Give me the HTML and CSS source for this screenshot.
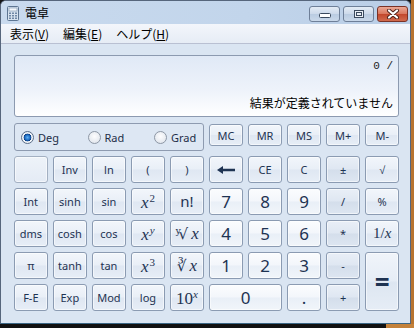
FILE: index.html
```html
<!DOCTYPE html>
<html lang="ja">
<head>
  <meta charset="UTF-8">
  <title>電卓</title>
  <link rel="stylesheet" href="styles.css">
</head>
<body>
  <div class="window">
    <div class="titlebar">
      <svg class="app-icon" width="12" height="15" viewBox="0 0 12 15">
        <rect x="0.5" y="0.5" width="11" height="14" rx="1" fill="#d6e2ef" stroke="#5d7592"/>
        <rect x="2" y="2" width="8" height="3" fill="#f4f8fc" stroke="#7a90aa" stroke-width="0.6"/>
        <g fill="#6f87a6">
          <rect x="2" y="6.5" width="2" height="1.5"/><rect x="5" y="6.5" width="2" height="1.5"/><rect x="8" y="6.5" width="2" height="1.5"/>
          <rect x="2" y="9" width="2" height="1.5"/><rect x="5" y="9" width="2" height="1.5"/><rect x="8" y="9" width="2" height="1.5"/>
          <rect x="2" y="11.5" width="2" height="1.5"/><rect x="5" y="11.5" width="2" height="1.5"/><rect x="8" y="11.5" width="2" height="1.5"/>
        </g>
      </svg>
      <span class="title">電卓</span>
      <div class="caption">
        <div class="cap-btn">
          <svg width="14" height="8" viewBox="0 0 14 8"><rect x="1.5" y="3.5" width="11" height="4" rx="1" fill="#fff" stroke="#3b4a5e"/></svg>
        </div>
        <div class="cap-btn">
          <svg width="12" height="10" viewBox="0 0 12 10"><rect x="1.5" y="1.5" width="9" height="7" fill="#e9eef5" stroke="#3b4a5e"/><rect x="3.5" y="3.5" width="5" height="3" fill="none" stroke="#3b4a5e"/></svg>
        </div>
        <div class="cap-btn close">
          <svg width="14" height="10" viewBox="0 0 14 10">
            <path d="M3 1.5 L11 8.5 M11 1.5 L3 8.5" stroke="#4a1f18" stroke-width="4" stroke-linecap="round"/>
            <path d="M3 1.5 L11 8.5 M11 1.5 L3 8.5" stroke="#fff" stroke-width="2.2" stroke-linecap="round"/>
          </svg>
        </div>
      </div>
    </div>

    <div class="menubar">
      <span class="menu-item">表示(<u>V</u>)</span>
      <span class="menu-item">編集(<u>E</u>)</span>
      <span class="menu-item">ヘルプ(<u>H</u>)</span>
    </div>

    <div class="content">
      <div class="display">
        <div class="expr">0 /</div>
        <div class="result">結果が定義されていません</div>
      </div>

      <div class="keypad">
        <div class="angle-box">
          <label class="angle"><span class="radio on"></span>Deg</label>
          <label class="angle"><span class="radio"></span>Rad</label>
          <label class="angle"><span class="radio"></span>Grad</label>
        </div>
        <button class="key mem">MC</button>
        <button class="key mem">MR</button>
        <button class="key mem">MS</button>
        <button class="key mem">M+</button>
        <button class="key mem">M-</button>

        <button class="key blank"></button>
        <button class="key">Inv</button>
        <button class="key">ln</button>
        <button class="key">(</button>
        <button class="key">)</button>
        <button class="key">
          <svg width="20" height="10" viewBox="0 0 20 10"><path d="M6 5 H19" stroke="#1e3352" stroke-width="2.4"/><path d="M1 5 L7 1 V9 Z" fill="#1e3352"/></svg>
        </button>
        <button class="key">CE</button>
        <button class="key">C</button>
        <button class="key op">±</button>
        <button class="key">√</button>

        <button class="key">Int</button>
        <button class="key">sinh</button>
        <button class="key">sin</button>
        <button class="key"><span class="math"><i>x</i><sup>2</sup></span></button>
        <button class="key big">n!</button>
        <button class="key num">7</button>
        <button class="key num">8</button>
        <button class="key num">9</button>
        <button class="key op">/</button>
        <button class="key">%</button>

        <button class="key">dms</button>
        <button class="key">cosh</button>
        <button class="key">cos</button>
        <button class="key"><span class="math"><i>x</i><sup><i>y</i></sup></span></button>
        <button class="key"><span class="math"><span class="root idx">ʸ√</span><i>x</i></span></button>
        <button class="key num">4</button>
        <button class="key num">5</button>
        <button class="key num">6</button>
        <button class="key op">*</button>
        <button class="key"><span class="math small">1/<i>x</i></span></button>

        <button class="key">π</button>
        <button class="key">tanh</button>
        <button class="key">tan</button>
        <button class="key"><span class="math"><i>x</i><sup>3</sup></span></button>
        <button class="key"><span class="math"><span class="root">∛</span><i>x</i></span></button>
        <button class="key num">1</button>
        <button class="key num">2</button>
        <button class="key num">3</button>
        <button class="key op">-</button>
        <button class="key equals">=</button>

        <button class="key">F-E</button>
        <button class="key">Exp</button>
        <button class="key">Mod</button>
        <button class="key">log</button>
        <button class="key"><span class="math up">10<sup><i>x</i></sup></span></button>
        <button class="key num zero">0</button>
        <button class="key num">.</button>
        <button class="key op">+</button>
      </div>
    </div>
  </div>
</body>
</html>
```
FILE: styles.css
```css
* {
  box-sizing: border-box;
}

html, body {
  margin: 0;
}

body {
  width: 414px;
  height: 328px;
  overflow: hidden;
  font-family: "Noto Sans", "Noto Sans CJK JP", sans-serif;
  background:
    linear-gradient(to right, #111 386px, #c4823b 386px) bottom / 100% 4px no-repeat,
    linear-gradient(to right, #151515 411px, #b8742f 411px);
}

.window {
  width: 411px;
  height: 324px;
  border: 1px solid #56667c;
  border-bottom-color: #3b6684;
  border-radius: 6px 6px 0 0;
  background: #dae5f2;
  display: flex;
  flex-direction: column;
  overflow: hidden;
}

/* title bar */
.titlebar {
  height: 23px;
  flex: none;
  display: flex;
  align-items: flex-start;
  padding-left: 6px;
  background: linear-gradient(to right, #c9daee, #c2d5eb 60%, #b9cde6);
}

.app-icon {
  margin-top: 5px;
}

.title {
  margin: 4px 0 0 6px;
  font-family: "Noto Sans CJK JP", sans-serif;
  font-size: 12px;
  line-height: 16px;
  color: #000;
}

.caption {
  margin-left: auto;
  margin-right: 2px;
  margin-top: 5px;
  display: flex;
  gap: 3px;
}

.cap-btn {
  width: 31px;
  height: 16px;
  border: 1px solid #6e7f98;
  border-radius: 3px;
  background: linear-gradient(#e3ebf5, #ccd9ea 50%, #b9cbe1 50%, #c9d8ea);
  display: flex;
  align-items: center;
  justify-content: center;
}

.cap-btn.close {
  border-color: #7a3226;
  background: linear-gradient(#eaa895, #d9765c 50%, #c2462b 50%, #d06a4d);
}

/* menu */
.menubar {
  height: 20px;
  flex: none;
  display: flex;
  align-items: center;
  padding-left: 2px;
  background: linear-gradient(#f3f6fb, #e6ecf5);
  border-bottom: 1px solid #b9c0d2;
}

.menu-item {
  padding: 0 7px;
  font-family: "Noto Sans CJK JP", sans-serif;
  font-size: 12px;
  line-height: 16px;
  color: #000;
}

.menu-item u {
  text-underline-offset: 1px;
}

/* content */
.content {
  padding: 11px 11px 0 13px;
}

.display {
  height: 62px;
  border: 1px solid #8c9ab0;
  border-radius: 3px;
  background: linear-gradient(#e0e9f6, #edf2fa 55%, #fff);
  display: flex;
  flex-direction: column;
  justify-content: space-between;
  align-items: flex-end;
  padding: 4px 5px 6px;
}

.expr {
  font-family: "Liberation Mono", monospace;
  font-size: 11px;
  line-height: 13px;
  color: #222;
}

.result {
  font-family: "Noto Sans CJK JP", sans-serif;
  font-size: 12px;
  line-height: 15px;
  color: #000;
}

.keypad {
  margin-top: 6px;
  display: grid;
  grid-template-columns: repeat(10, 1fr);
  grid-template-rows: 28px repeat(5, 27px);
  column-gap: 5.4px;
  row-gap: 5px;
}

.angle-box {
  grid-column: 1 / 6;
  border: 1px solid #8e9bb0;
  border-radius: 3px;
  background: #dde7f3;
  display: grid;
  grid-template-columns: repeat(3, 66.5px);
  align-items: center;
  padding-left: 6px;
}

.angle {
  display: flex;
  align-items: center;
  gap: 4px;
  font-size: 11px;
  color: #1d2e48;
}

.radio {
  width: 13px;
  height: 13px;
  border-radius: 50%;
  border: 1px solid #8d97a5;
  background: radial-gradient(circle at 50% 40%, #fdfdfe, #dbe1e9);
}

.radio.on {
  border-color: #5c6f88;
  background: radial-gradient(circle, #5fb0f0 0, #1e6cc4 2.6px, #0c3f80 3.6px, #f4f7fb 4.2px, #dbe1e9);
}

.key {
  margin: 0;
  padding: 0;
  border: 1px solid #8b9bb2;
  border-radius: 3px;
  background: linear-gradient(#f2f6fb, #e9eff7 48%, #dfe7f2 52%, #e7eef7);
  box-shadow: inset 0 0 0 1px rgba(255, 255, 255, 0.55);
  font-family: "Noto Sans", sans-serif;
  font-size: 11px;
  color: #1e3352;
  display: flex;
  align-items: center;
  justify-content: center;
  line-height: 1;
}

.key.mem {
  align-self: start;
  height: 22px;
  margin-top: 1px;
}

.key.blank {
  background: linear-gradient(#eef3f9, #e4ebf5);
  border-color: #a3b0c2;
}

.key.num {
  font-size: 17px;
  background: linear-gradient(#fbfcfe, #f3f6fb 48%, #e9eff7 52%, #f1f5fa);
}

.key.op {
  background: linear-gradient(#e9eff7, #dfe7f2 48%, #d4deeb 52%, #dde6f1);
}

.key.zero {
  grid-column: span 2;
}

.key.equals {
  grid-row: span 2;
  font-size: 26px;
  font-weight: bold;
  background: linear-gradient(#f0f4fa, #e6edf6 48%, #dde6f1 52%, #e6edf6);
}

.key.big {
  font-size: 15px;
}

.math {
  font-family: "Liberation Serif", "DejaVu Serif", serif;
  font-size: 17px;
  color: #1e3352;
  white-space: nowrap;
}

.math sup {
  font-size: 11px;
  vertical-align: 6px;
  margin-left: 1px;
}

.math.small {
  font-size: 15px;
}

.math.up sup {
  margin-left: 0;
}

.root {
  font-family: "DejaVu Serif", serif;
  font-size: 15px;
  margin-right: 3px;
}

.root.idx {
  letter-spacing: -3px;
  margin-right: 6px;
}
```
